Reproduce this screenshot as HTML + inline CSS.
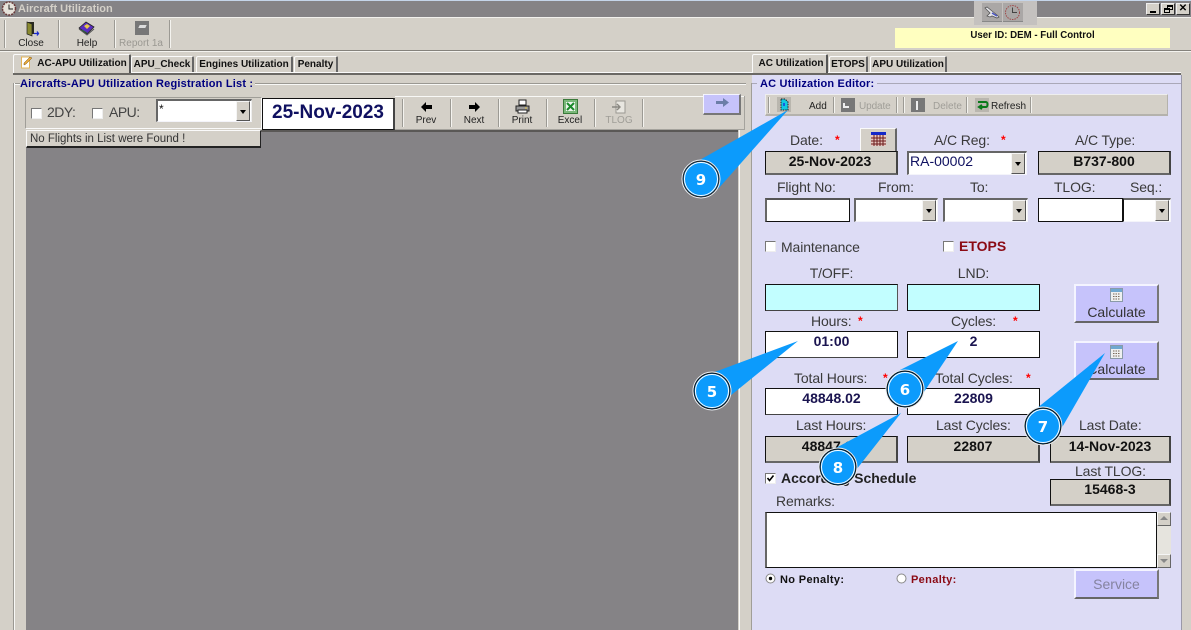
<!DOCTYPE html>
<html><head><meta charset="utf-8"><style>
html,body{margin:0;padding:0}
body{width:1191px;height:630px;overflow:hidden;position:relative;background:#d4d0c8;font-family:"Liberation Sans",sans-serif;color:#333}
div,span.a,svg.a{position:absolute;box-sizing:border-box}
.t{white-space:nowrap;line-height:16px;height:16px}
.l{font-size:14px;color:#3a3a3a;text-align:center;white-space:nowrap;line-height:16px;height:16px;letter-spacing:-.12px}
.s{color:#f00;font-size:12px;line-height:12px;height:12px;width:8px;font-weight:bold}
.b{font-weight:bold;font-size:10px;color:#111;white-space:nowrap;line-height:14px;height:14px}
.tb{font-size:10px;color:#222;text-align:center;white-space:nowrap;line-height:12px;height:12px;margin-top:2px}
.sep{width:2px;background:#f4f3ef;border-left:1px solid #9c9a94}
.w{background:#fff;border:1px solid #111;border-top:2px solid #555;border-left:2px solid #666;text-align:center;font-weight:bold;font-size:14px;color:#1a1450;line-height:19px}
.g{background:#d4d0c8;border:1px solid #111;border-right:2px solid #444;border-bottom:2px solid #666;text-align:center;font-weight:bold;font-size:14px;color:#111;line-height:18px}
.c{background:#fff;border-top:2px solid #666;border-left:2px solid #666;border-right:1px solid #f4f4fa;border-bottom:1px solid #f4f4fa}
.ar{right:1px;top:0;bottom:0;width:14px;background:#d4d0c8;border-right:1px solid #555;border-bottom:1px solid #555;border-left:1px solid #f5f5f5;border-top:1px solid #f5f5f5}
.ar:after{content:"";position:absolute;left:3px;top:8px;border-left:3.5px solid transparent;border-right:3.5px solid transparent;border-top:4px solid #000}
.cb{width:11px;height:11px;background:#fff;border:1px solid #777;border-right-color:#eee;border-bottom-color:#eee}
.btn{background:#c6c3fb;border-top:2px solid #f4f4ff;border-left:2px solid #f4f4ff;border-right:2px solid #777;border-bottom:2px solid #666;text-align:center;font-size:14px;color:#333}
.tab{background:#d4d0c8;border-top:1px solid #fafafa;border-left:1px solid #fafafa;border-right:2px solid #666;border-radius:2px 2px 0 0;font-weight:bold;font-size:10px;color:#111;text-align:center;line-height:17px;white-space:nowrap}
.gt{font-weight:bold;font-size:11px;color:#000080;background:#d4d0c8;white-space:nowrap;line-height:14px;height:14px;letter-spacing:.2px}
</style></head><body>

<!-- title bar -->
<div style="left:0;top:0;width:1191px;height:1px;background:#c5d5ea"></div>
<div style="left:0;top:1px;width:1191px;height:16px;background:#858386"></div>
<div style="left:0;top:17px;width:1191px;height:1px;background:#f2f1ed"></div>
<svg class="a" style="left:1px;top:1px" width="16" height="15" viewBox="0 0 16 15"><circle cx="8" cy="7.500" r="6.500" fill="#e6e2da" stroke="#6a3a3a" stroke-width="1.500" stroke-dasharray="2 1"/><path d="M8 3.500V8H12" fill="none" stroke="#222" stroke-width="1"/></svg>
<div class="t" style="left:18px;top:1px;font-size:11px;font-weight:bold;color:#d4d0c8">Aircraft Utilization</div>
<div style="left:974px;top:1px;width:63px;height:24px;background:#c4c1bf"></div>
<div style="left:982px;top:3px;width:20px;height:19px;background:#aaa7a6;border-bottom:1px solid #888"></div>
<div style="left:1003px;top:3px;width:20px;height:19px;background:#aaa7a6;border-bottom:1px solid #888"></div>
<svg class="a" style="left:984px;top:5px" width="16" height="15" viewBox="0 0 16 15"><path d="M1 3l2-1 5 4 5 4 2 2-2 1-5-2-2 1-3-1 3-3z" fill="#e6e6ea" stroke="#555" stroke-width=".8"/><path d="M8 8l5 3" stroke="#4a55c0" stroke-width="1.500"/></svg>
<svg class="a" style="left:1004px;top:4px" width="17" height="17" viewBox="0 0 17 17"><circle cx="8.500" cy="8.500" r="7" fill="none" stroke="#a04a4a" stroke-dasharray="1.500 1"/><path d="M8.500 3.500v5h4.500" stroke="#444" fill="none"/></svg>
<div style="left:1146px;top:3px;width:14px;height:12px;background:#d4d0c8;border:1px solid #eee;border-right-color:#333;border-bottom-color:#333"><div style="left:3px;bottom:1px;width:6px;height:2px;background:#000"></div></div>
<div style="left:1161px;top:3px;width:14px;height:12px;background:#d4d0c8;border:1px solid #eee;border-right-color:#333;border-bottom-color:#333"><div style="left:5px;top:1px;width:6px;height:5px;border:1px solid #000;border-top-width:2px"></div><div style="left:2px;top:4px;width:6px;height:5px;border:1px solid #000;border-top-width:2px;background:#d4d0c8"></div></div>
<div style="left:1176px;top:3px;width:14px;height:12px;background:#d4d0c8;border:1px solid #eee;border-right-color:#333;border-bottom-color:#333;font-size:10px;font-weight:bold;color:#000;text-align:center;line-height:10px">✕</div>

<!-- toolbar -->
<div class="sep" style="left:4px;top:20px;height:28px"></div>
<div class="sep" style="left:58px;top:20px;height:28px"></div>
<div class="sep" style="left:114px;top:20px;height:28px"></div>
<div class="sep" style="left:169px;top:20px;height:28px"></div>
<svg class="a" style="left:24px;top:20px" width="16" height="17" viewBox="0 0 16 17"><path d="M3 2h7v12H3z" fill="#2a2a20"/><path d="M3 2l5 2v12l-5-2z" fill="#8a8a30" stroke="#222" stroke-width=".7"/><path d="M10 13.500h4M13 11.500l1.500 2-1.500 2" fill="none" stroke="#1a2ad0" stroke-width="1.300"/></svg>
<svg class="a" style="left:78px;top:20px" width="17" height="17" viewBox="0 0 17 17"><path d="M1 8l7-6 8 5-7 7z" fill="#5a2cc0" stroke="#222" stroke-width=".8"/><path d="M6 6l3-2 3 2-3 3z" fill="#e8c84a"/><path d="M1 9l8 6 7-6" fill="none" stroke="#555"/><path d="M4 10l5 3" stroke="#2a6a3a"/></svg>
<div style="left:135px;top:21px;width:14px;height:14px;background:#777"><div style="left:4px;top:4px;width:7px;height:3px;background:#ddd;transform:skewX(-25deg)"></div></div>
<div class="tb" style="left:10px;top:36px;width:42px">Close</div>
<div class="tb" style="left:66px;top:36px;width:42px">Help</div>
<div class="tb" style="left:116px;top:36px;width:50px;color:#9a9892">Report 1a</div>
<div style="left:895px;top:28px;width:275px;height:20px;background:#ffffc0"></div>
<div class="b" style="left:895px;top:29px;width:275px;text-align:center;font-size:9.700px">User ID: DEM - Full Control</div>
<div style="left:0;top:50px;width:1191px;height:1px;background:#85827c"></div>
<div style="left:0;top:51px;width:1191px;height:1px;background:#f4f3ef"></div>

<!-- tabs row lines -->
<div style="left:13px;top:72px;width:1168px;height:1px;background:#fafafa"></div>
<div style="left:13px;top:73px;width:1168px;height:2px;background:#6a6864"></div>
<div class="tab" style="left:13px;top:54px;width:118px;height:19px;padding-left:21px;font-size:10px;border-right:2px solid #555;z-index:2">AC-APU Utilization</div>
<svg class="a" style="left:20px;top:55px;z-index:3" width="13" height="14" viewBox="0 0 13 14"><path d="M1.500 2h8v11h-8z" fill="#fff" stroke="#e3b458"/><path d="M4 8l6-6 2 1-6 6-2 1z" fill="#e8a83a" stroke="#7a5a20" stroke-width=".5"/></svg>
<div class="tab" style="left:131px;top:56px;width:63px;height:16px;line-height:15px">APU_Check</div>
<div class="tab" style="left:196px;top:56px;width:97px;height:16px;line-height:15px">Engines Utilization</div>
<div class="tab" style="left:294px;top:56px;width:44px;height:16px;line-height:15px">Penalty</div>
<div class="tab" style="left:752px;top:54px;width:76px;height:19px;padding-left:3px;border-right:2px solid #555;z-index:2">AC Utilization</div>
<div class="tab" style="left:829px;top:56px;width:39px;height:16px;line-height:15px">ETOPS</div>
<div class="tab" style="left:870px;top:56px;width:77px;height:16px;line-height:15px">APU Utilization</div>

<!-- left group -->
<div style="left:13px;top:83px;width:733px;height:1px;background:#9a9892"></div>
<div style="left:13px;top:84px;width:733px;height:1px;background:#f8f8f6"></div>
<div style="left:13px;top:83px;width:1px;height:547px;background:#9a9892"></div>
<div style="left:14px;top:83px;width:1px;height:547px;background:#f8f8f6"></div>
<div class="gt" style="left:20px;top:76px;padding:1px 2px 0 0;height:15px">Aircrafts-APU Utilization Registration List :</div>

<div style="left:25px;top:97px;width:237px;height:32px;border:1px solid #a09e98;border-right-color:#fafafa;border-bottom-color:#fafafa"></div>
<div style="left:395px;top:96px;width:350px;height:1px;background:#f8f8f6"></div>
<div style="left:344px;top:129px;width:401px;height:1px;background:#a5a39d"></div>
<div style="left:744px;top:96px;width:1px;height:34px;background:#a5a39d"></div>
<div class="cb" style="left:31px;top:108px;width:11px;height:11px"></div>
<div class="t" style="left:47px;top:104px;font-size:14px;color:#444;letter-spacing:-.5px">2DY:</div>
<div class="cb" style="left:92px;top:108px;width:11px;height:11px"></div>
<div class="t" style="left:109px;top:104px;font-size:14px;color:#444;letter-spacing:-.5px">APU:</div>
<div class="c" style="left:156px;top:99px;width:96px;height:23px;border-right:1px solid #eee;font-size:12px;color:#111;line-height:16px;padding-left:1px">*<div class="ar"></div></div>
<div style="left:262px;top:98px;width:133px;height:32px;background:#fff;border:1px solid #111;border-right:2px solid #444;text-align:center;font-weight:bold;font-size:19px;color:#0f1060;line-height:27px">25-Nov-2023</div>

<div class="sep" style="left:402px;top:99px;height:28px"></div>
<div class="sep" style="left:450px;top:99px;height:28px"></div>
<div class="sep" style="left:498px;top:99px;height:28px"></div>
<div class="sep" style="left:546px;top:99px;height:28px"></div>
<div class="sep" style="left:594px;top:99px;height:28px"></div>
<div class="sep" style="left:642px;top:99px;height:28px"></div>
<svg class="a" style="left:420px;top:101px" width="13" height="12" viewBox="0 0 13 12"><path d="M1 6l5-5v3h6v4H6v3z" fill="#000"/></svg>
<svg class="a" style="left:468px;top:101px" width="13" height="12" viewBox="0 0 13 12"><path d="M12 6L7 1v3H1v4h6v3z" fill="#000"/></svg>
<svg class="a" style="left:515px;top:99px" width="15" height="15" viewBox="0 0 15 15"><path d="M4 1h7v5H4z" fill="#fff" stroke="#222"/><path d="M1 7h13v5H1z" fill="#999" stroke="#222"/><path d="M3 11h9v3H3z" fill="#fff" stroke="#222"/><path d="M10 9h2" stroke="#e8c83a"/></svg>
<svg class="a" style="left:563px;top:99px" width="15" height="15" viewBox="0 0 15 15"><rect x=".5" y=".5" width="14" height="14" fill="#7ab87a" stroke="#3a7a3a"/><rect x="3" y="3" width="9" height="9" fill="#eef4ee"/><path d="M4 4l7 7M11 4l-7 7" stroke="#1a8a2a" stroke-width="2"/></svg>
<svg class="a" style="left:611px;top:100px" width="15" height="14" viewBox="0 0 15 14"><path d="M5 1h9v12H5z" fill="#e8e6e0" stroke="#9a9892"/><path d="M1 7h7M6 4l3 3-3 3" fill="none" stroke="#8a8882" stroke-width="1.400"/></svg>
<div class="tb" style="left:404px;top:113px;width:44px">Prev</div>
<div class="tb" style="left:452px;top:113px;width:44px">Next</div>
<div class="tb" style="left:500px;top:113px;width:44px">Print</div>
<div class="tb" style="left:548px;top:113px;width:44px">Excel</div>
<div class="tb" style="left:597px;top:113px;width:44px;color:#a09e98">TLOG</div>
<div style="left:703px;top:94px;width:38px;height:21px;background:#c6c3fb;border-top:1px solid #f4f4ff;border-left:1px solid #f4f4ff;border-right:2px solid #777;border-bottom:2px solid #777"></div>
<svg class="a" style="left:715px;top:97px" width="15" height="11" viewBox="0 0 15 11"><path d="M14 5.500L8 1v3H1v3h7v3z" fill="#6c7ea8"/></svg>

<div style="left:26px;top:130px;width:712px;height:500px;background:#858386;border-top:2px solid #5a5856"></div>
<div style="left:26px;top:130px;width:235px;height:18px;background:#d4d0c8;border-top:1px solid #fafafa;border-left:1px solid #fafafa;border-right:1px solid #222;border-bottom:2px solid #222;font-size:11.500px;color:#333;line-height:17px;padding-left:3px;white-space:nowrap">No Flights in List were Found !</div>
<div style="left:739px;top:130px;width:1px;height:500px;background:#fafafa"></div>

<!-- right group -->
<div style="left:752px;top:75px;width:429px;height:555px;background:#dddcf5"></div>
<div style="left:751px;top:83px;width:430px;height:1px;background:#aaa8b8"></div>
<div style="left:751px;top:83px;width:1px;height:547px;background:#a09e98"></div>
<div style="left:1181px;top:75px;width:1px;height:555px;background:#9a98a8"></div>
<div class="gt" style="left:757px;top:76px;background:#dddcf5;padding:1px 3px 0;height:15px">AC Utilization Editor:</div>

<div style="left:765px;top:94px;width:403px;height:22px;background:#d4d0c8;border-bottom:2px solid #b4b2ac;border-right:1px solid #b4b2ac;border-top:1px solid #eee;border-left:1px solid #eee"></div>
<div class="sep" style="left:768px;top:97px;height:16px"></div>
<div class="sep" style="left:833px;top:97px;height:16px"></div>
<div class="sep" style="left:896px;top:97px;height:16px"></div>
<div class="sep" style="left:903px;top:97px;height:16px"></div>
<div class="sep" style="left:966px;top:97px;height:16px"></div>
<div class="sep" style="left:1030px;top:97px;height:16px"></div>
<div style="left:777px;top:97px;width:14px;height:15px;background:#b9b6ae"></div>
<svg class="a" style="left:777px;top:97px" width="14" height="15" viewBox="0 0 14 15"><path d="M4 2h4l3 3v8H4z" fill="#12c8e0" stroke="#222" stroke-dasharray="1.500 1"/><path d="M6 6h2v3H6z" fill="#1a5ae0"/></svg>
<div class="tb" style="left:809px;top:99px;color:#222">Add</div>
<div style="left:841px;top:98px;width:14px;height:14px;background:#777"><div style="left:2px;top:8px;width:6px;height:2px;background:#eee"></div><div style="left:2px;top:5px;width:2px;height:4px;background:#eee"></div></div>
<div class="tb" style="left:859px;top:99px;color:#a09e98;letter-spacing:-.1px">Update</div>
<div style="left:911px;top:98px;width:14px;height:14px;background:#777"><div style="left:5px;top:3px;width:2px;height:9px;background:#eee"></div></div>
<div class="tb" style="left:933px;top:99px;color:#a09e98">Delete</div>
<div style="left:975px;top:98px;width:14px;height:14px;background:#b9b6ae"></div>
<svg class="a" style="left:976px;top:99px" width="13" height="12" viewBox="0 0 13 12"><path d="M2 3h8c2 0 2 5 0 5H5M6 6L3 8l3 2" fill="none" stroke="#0a7a1a" stroke-width="2"/></svg>
<div class="tb" style="left:991px;top:99px;color:#222">Refresh</div>

<div class="l" style="left:790px;top:132px">Date:</div><div class="s" style="left:835px;top:134px">*</div>
<div style="left:860px;top:128px;width:37px;height:24px;background:#d4d0c8;border-top:1px solid #fafafa;border-left:1px solid #fafafa;border-right:2px solid #666;border-bottom:1px solid #666"></div>
<svg class="a" style="left:871px;top:132px" width="15" height="14" viewBox="0 0 15 14"><rect width="15" height="14" fill="#e8c8c0"/><rect width="15" height="3" fill="#1428c8"/><path d="M0 6h15M0 9h15M0 12h15M3 3v11M6 3v11M9 3v11M12 3v11" stroke="#6a1a1a"/></svg>
<div class="l" style="left:934px;top:132px">A/C Reg:</div><div class="s" style="left:1001px;top:134px">*</div>
<div class="l" style="left:1075px;top:132px">A/C Type:</div>
<div class="g" style="left:765px;top:151px;width:133px;height:24px;padding-right:2px">25-Nov-2023</div>
<div class="c" style="left:907px;top:151px;width:120px;height:24px;font-size:14px;color:#0f1060;line-height:17px;padding-left:1px">RA-00002<div class="ar"></div></div>
<div class="g" style="left:1038px;top:151px;width:133px;height:24px">B737-800</div>

<div class="l" style="left:777px;top:179px">Flight No:</div>
<div class="l" style="left:878px;top:179px">From:</div>
<div class="l" style="left:970px;top:179px">To:</div>
<div class="l" style="left:1054px;top:179px">TLOG:</div>
<div class="l" style="left:1130px;top:179px">Seq.:</div>
<div class="w" style="left:765px;top:198px;width:85px;height:24px"></div>
<div class="c" style="left:854px;top:198px;width:84px;height:24px"><div class="ar"></div></div>
<div class="c" style="left:943px;top:198px;width:85px;height:24px"><div class="ar"></div></div>
<div class="w" style="left:1038px;top:198px;width:85px;height:24px;border-left:1px solid #111;border-top:1px solid #111"></div>
<div class="c" style="left:1123px;top:198px;width:48px;height:24px;border-left:1px solid #111"><div class="ar"></div></div>

<div class="cb" style="left:765px;top:241px"></div>
<div class="l" style="left:781px;top:239px">Maintenance</div>
<div class="cb" style="left:943px;top:241px"></div>
<div class="t" style="left:959px;top:238px;font-size:14px;font-weight:bold;color:#8b0a14">ETOPS</div>

<div class="l" style="left:765px;top:265px;width:133px">T/OFF:</div>
<div class="l" style="left:907px;top:265px;width:133px">LND:</div>
<div style="left:765px;top:284px;width:133px;height:27px;background:#c2feff;border:1px solid #111;border-right:1px solid #555;border-bottom:1px solid #444"></div>
<div style="left:907px;top:284px;width:133px;height:27px;background:#c2feff;border:1px solid #111"></div>

<div class="btn" style="left:1074px;top:284px;width:85px;height:39px;padding-top:17px;line-height:18px">Calculate</div>
<div class="btn" style="left:1074px;top:341px;width:85px;height:39px;padding-top:17px;line-height:18px">Calculate</div>
<svg class="a" style="left:1110px;top:288px" width="13" height="14" viewBox="0 0 13 14"><rect x=".5" y=".5" width="12" height="13" fill="#eef0f0" stroke="#8a9aa8"/><rect x="1" y="1" width="11" height="3" fill="#6fa8d0"/><path d="M3 6h7M3 8.500h7M3 11h7" stroke="#7a6a5a" stroke-dasharray="1.500 1"/></svg>
<svg class="a" style="left:1110px;top:345px" width="13" height="14" viewBox="0 0 13 14"><rect x=".5" y=".5" width="12" height="13" fill="#eef0f0" stroke="#8a9aa8"/><rect x="1" y="1" width="11" height="3" fill="#6fa8d0"/><path d="M3 6h7M3 8.500h7M3 11h7" stroke="#7a6a5a" stroke-dasharray="1.500 1"/></svg>

<div class="l" style="left:811px;top:313px">Hours:</div><div class="s" style="left:858px;top:315px">*</div>
<div class="l" style="left:951px;top:313px">Cycles:</div><div class="s" style="left:1013px;top:315px">*</div>
<div class="w" style="left:765px;top:331px;width:133px;height:27px;border-top-width:1px;border-left-width:1px;border-left-color:#111;border-top-color:#111;border-bottom-color:#444">01:00</div>
<div class="w" style="left:907px;top:331px;width:133px;height:27px;border-top-width:1px;border-left-width:1px;border-left-color:#111;border-top-color:#111">2</div>

<div class="l" style="left:794px;top:370px">Total Hours:</div><div class="s" style="left:883px;top:372px">*</div>
<div class="l" style="left:935px;top:370px">Total Cycles:</div><div class="s" style="left:1026px;top:372px">*</div>
<div class="w" style="left:765px;top:388px;width:133px;height:27px;border-top-width:1px;border-left-width:1px;border-left-color:#111;border-top-color:#111;border-bottom-color:#444">48848.02</div>
<div class="w" style="left:907px;top:388px;width:133px;height:27px;border-top-width:1px;border-left-width:1px;border-left-color:#111;border-top-color:#111">22809</div>

<div class="l" style="left:796px;top:417px">Last Hours:</div>
<div class="l" style="left:936px;top:417px">Last Cycles:</div>
<div class="l" style="left:1079px;top:417px">Last Date:</div>
<div class="g" style="left:765px;top:436px;width:133px;height:27px">48847.02</div>
<div class="g" style="left:907px;top:436px;width:133px;height:27px">22807</div>
<div class="g" style="left:1050px;top:436px;width:121px;height:27px">14-Nov-2023</div>

<div class="l" style="left:1075px;top:463px">Last TLOG:</div>
<div class="g" style="left:1050px;top:479px;width:121px;height:27px">15468-3</div>

<div class="cb" style="left:765px;top:473px"></div>
<svg class="a" style="left:766px;top:474px" width="9" height="9" viewBox="0 0 9 9"><path d="M1.500 4l2 2.500 4-5" fill="none" stroke="#000" stroke-width="1.600"/></svg>
<div class="t" style="left:781px;top:470px;font-size:14px;font-weight:bold;color:#222">According Schedule</div>

<div class="l" style="left:776px;top:493px">Remarks:</div>
<div style="left:765px;top:512px;width:392px;height:56px;background:#fff;border:1px solid #111;border-left:2px solid #666"></div>
<div style="left:1157px;top:512px;width:14px;height:56px;background:#e6e4de"></div>
<div style="left:1157px;top:512px;width:14px;height:14px;background:#d4d0c8;border:1px solid #f5f5f5;border-right-color:#666;border-bottom-color:#666"><div style="left:2px;top:3px;border-left:4px solid transparent;border-right:4px solid transparent;border-bottom:4px solid #888"></div></div>
<div style="left:1157px;top:554px;width:14px;height:14px;background:#d4d0c8;border:1px solid #f5f5f5;border-right-color:#666;border-bottom-color:#666"><div style="left:2px;top:4px;border-left:4px solid transparent;border-right:4px solid transparent;border-top:4px solid #888"></div></div>

<svg class="a" style="left:765px;top:573px" width="11" height="11" viewBox="0 0 11 11"><circle cx="5.500" cy="5.500" r="4.500" fill="#fff" stroke="#888"/><circle cx="5.500" cy="5.500" r="1.700" fill="#000"/></svg>
<div class="t" style="left:780px;top:572px;font-size:11px;font-weight:bold;color:#111;letter-spacing:.35px">No Penalty:</div>
<svg class="a" style="left:896px;top:573px" width="11" height="11" viewBox="0 0 11 11"><circle cx="5.500" cy="5.500" r="4.500" fill="#fff" stroke="#888"/></svg>
<div class="t" style="left:911px;top:572px;font-size:11px;font-weight:bold;color:#8b0a14;letter-spacing:.35px">Penalty:</div>
<div class="btn" style="left:1074px;top:569px;width:85px;height:30px;line-height:26px;color:#85839f">Service</div>

<!-- callouts -->
<svg class="a" style="left:0;top:0;z-index:10" width="1191" height="630" viewBox="0 0 1191 630" font-family="'DejaVu Sans','Liberation Sans',sans-serif" font-weight="bold" font-size="15" text-anchor="middle" fill="#fff">
<path d="M788 110L698 161L718 189Z" fill="#0c9bfc"/>
<path d="M798 341L712 373L730 396Z" fill="#0c9bfc"/>
<path d="M958 341L896 372L924 392Z" fill="#0c9bfc"/>
<path d="M1105 353L1036 409L1060 431Z" fill="#0c9bfc"/>
<path d="M901 413L834 449L856 470Z" fill="#0c9bfc"/>
<g stroke="#111" stroke-width="1.200" fill="#0c9bfc">
<circle cx="701" cy="179" r="18" stroke="#222"/>
<circle cx="712" cy="391" r="18"/>
<circle cx="905" cy="389" r="18"/>
<circle cx="1043" cy="426" r="18"/>
<circle cx="838" cy="467" r="18"/>
</g>
<g fill="none" stroke="#e8eef4" stroke-width="1">
<circle cx="701" cy="179" r="19"/><circle cx="712" cy="391" r="19"/><circle cx="905" cy="389" r="19"/><circle cx="1043" cy="426" r="19"/><circle cx="838" cy="467" r="19"/>
</g>
<g fill="none" stroke="#fff" stroke-width="1">
<circle cx="701" cy="179" r="16.500"/><circle cx="712" cy="391" r="16.500"/><circle cx="905" cy="389" r="16.500"/><circle cx="1043" cy="426" r="16.500"/><circle cx="838" cy="467" r="16.500"/>
</g>
<text x="701" y="185">9</text>
<text x="712" y="397">5</text>
<text x="905" y="395">6</text>
<text x="1043" y="432">7</text>
<text x="838" y="473">8</text>
</svg>
</body></html>
